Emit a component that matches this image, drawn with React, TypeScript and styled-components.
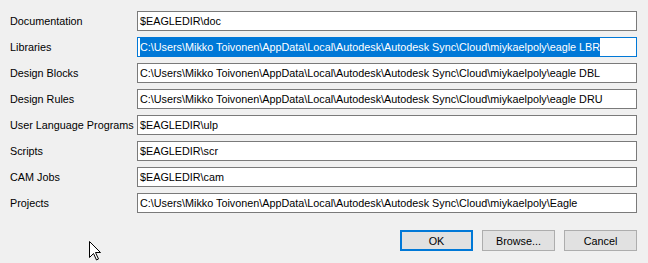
import React from "react";
import styled, { createGlobalStyle } from "styled-components";

const GlobalStyle = createGlobalStyle`
  html, body {
    margin: 0;
    padding: 0;
    background: #f0f0f0;
  }
  body {
    font-family: Tahoma, "Liberation Sans", Arial, sans-serif;
    font-size: 10.8px;
    color: #000;
  }
`;

const Dialog = styled.div`
  position: relative;
  width: 648px;
  height: 263px;
  box-sizing: border-box;
  padding: 11px 11px 0 10px;
  background: #f0f0f0;
  display: flex;
  flex-direction: column;
`;

const Form = styled.div`
  display: grid;
  grid-template-columns: 127px 500px;
  row-gap: 6px;
`;

const Label = styled.div`
  height: 20px;
  line-height: 21px;
  white-space: nowrap;
`;

const Field = styled.div<{ $focused?: boolean }>`
  height: 20px;
  box-sizing: border-box;
  border: 1px solid ${(p) => (p.$focused ? "#0078d7" : "#7a7a7a")};
  background: #fff;
  padding: 0 0 0 2px;
  display: flex;
  align-items: center;
  white-space: nowrap;
  overflow: hidden;
`;

const FieldText = styled.span<{ $selected?: boolean }>`
  line-height: 17px;
  padding-top: 1px;
  background: ${(p) => (p.$selected ? "#0078d7" : "transparent")};
  color: ${(p) => (p.$selected ? "#fff" : "#000")};
`;

const Buttons = styled.div`
  display: flex;
  justify-content: flex-end;
  gap: 9px;
  margin-top: 17px;
`;

const Button = styled.div<{ $default?: boolean }>`
  width: 73px;
  height: 21px;
  box-sizing: border-box;
  background: #e1e1e1;
  border: ${(p) => (p.$default ? "2px solid #0078d7" : "1px solid #adadad")};
  display: flex;
  align-items: center;
  justify-content: center;
`;

const Cursor = styled.svg`
  position: absolute;
  left: 89px;
  top: 241px;
`;

const rows = [
  { label: "Documentation", value: "$EAGLEDIR\\doc" },
  {
    label: "Libraries",
    value:
      "C:\\Users\\Mikko Toivonen\\AppData\\Local\\Autodesk\\Autodesk Sync\\Cloud\\miykaelpoly\\eagle LBR",
    focused: true,
  },
  {
    label: "Design Blocks",
    value:
      "C:\\Users\\Mikko Toivonen\\AppData\\Local\\Autodesk\\Autodesk Sync\\Cloud\\miykaelpoly\\eagle DBL",
  },
  {
    label: "Design Rules",
    value:
      "C:\\Users\\Mikko Toivonen\\AppData\\Local\\Autodesk\\Autodesk Sync\\Cloud\\miykaelpoly\\eagle DRU",
  },
  { label: "User Language Programs", value: "$EAGLEDIR\\ulp" },
  { label: "Scripts", value: "$EAGLEDIR\\scr" },
  { label: "CAM Jobs", value: "$EAGLEDIR\\cam" },
  {
    label: "Projects",
    value:
      "C:\\Users\\Mikko Toivonen\\AppData\\Local\\Autodesk\\Autodesk Sync\\Cloud\\miykaelpoly\\Eagle",
  },
];

const App = () => {
  return (
    <>
      <GlobalStyle />
      <Dialog>
        <Form>
          {rows.map((r) => (
            <React.Fragment key={r.label}>
              <Label>{r.label}</Label>
              <Field $focused={r.focused}>
                <FieldText $selected={r.focused}>{r.value}</FieldText>
              </Field>
            </React.Fragment>
          ))}
        </Form>
        <Buttons>
          <Button $default>OK</Button>
          <Button>Browse...</Button>
          <Button>Cancel</Button>
        </Buttons>
        <Cursor width="13" height="20" viewBox="0 0 13 20">
          <path
            d="M0.5 0.5 L0.5 16.5 L4.5 12.5 L7.5 19 L9.5 18 L6.5 11.5 L11.5 11.5 Z"
            fill="#fff"
            stroke="#000"
            strokeWidth="1"
            strokeLinejoin="miter"
          />
        </Cursor>
      </Dialog>
    </>
  );
};

export default App;
